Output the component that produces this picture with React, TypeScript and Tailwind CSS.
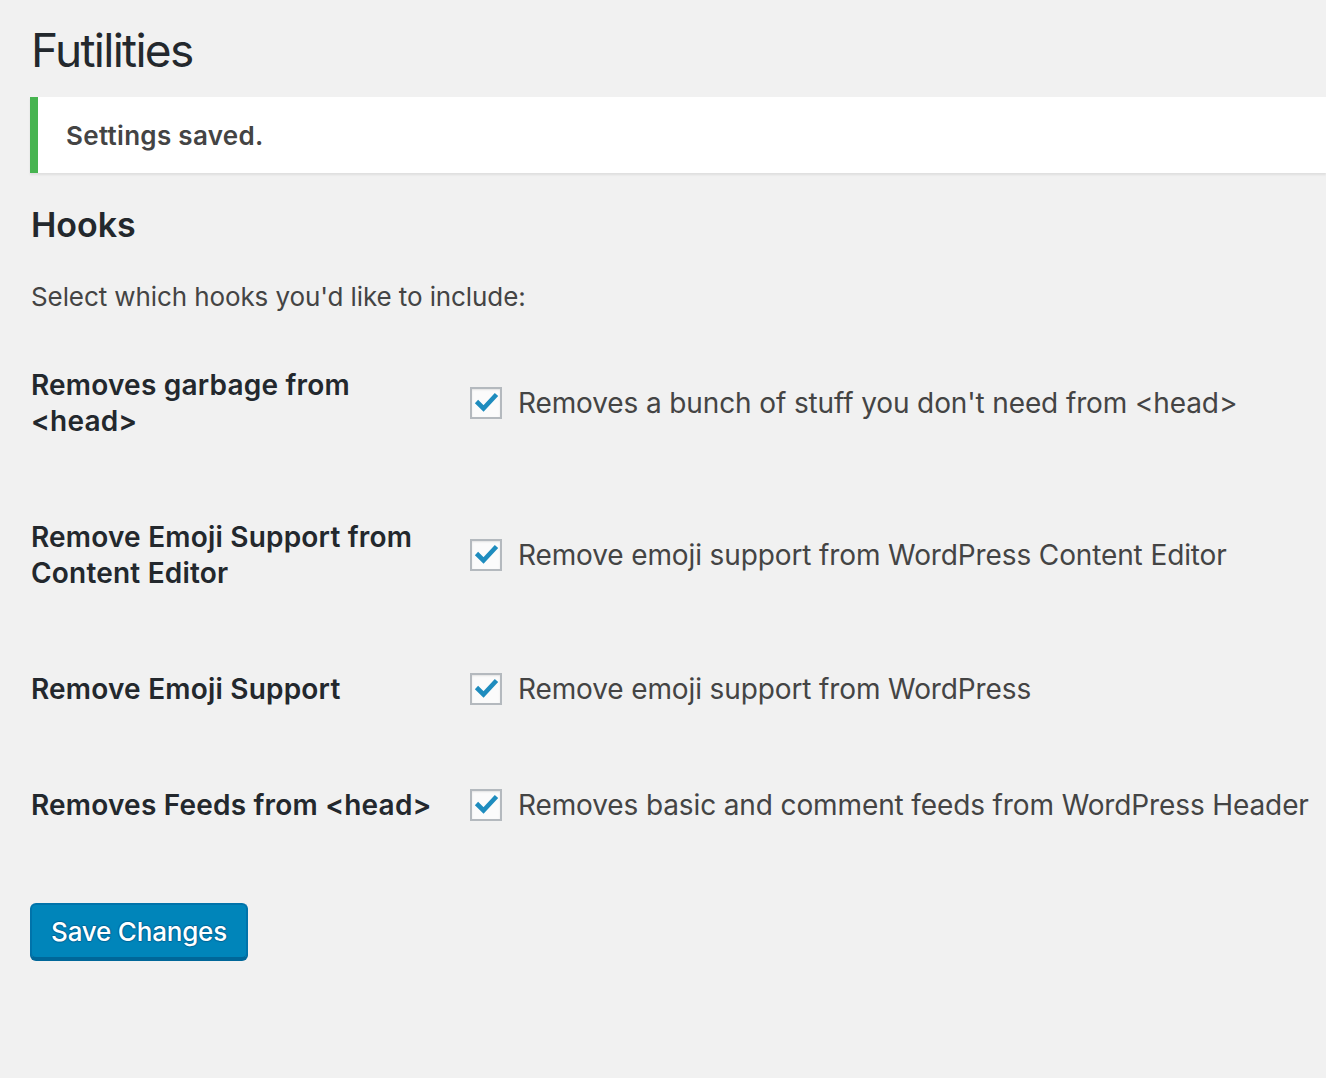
import React from "react";

const rows: { label: React.ReactNode; desc: string }[] = [
  { label: <>Removes garbage from<br />&lt;head&gt;</>, desc: "Removes a bunch of stuff you don't need from <head>" },
  { label: <>Remove Emoji Support from<br />Content Editor</>, desc: "Remove emoji support from WordPress Content Editor" },
  { label: <>Remove Emoji Support</>, desc: "Remove emoji support from WordPress" },
  { label: <>Removes Feeds from &lt;head&gt;</>, desc: "Removes basic and comment feeds from WordPress Header" },
];

function Check() {
  return (
    <span className="flex h-[32px] w-[32px] shrink-0 items-center justify-center border-2 border-[#b4b9be] bg-[#fbfbfb] shadow-[inset_0_1px_2px_rgba(0,0,0,0.1)]">
      <svg width="28" height="28" viewBox="0 0 28 28">
        <path d="M4.5 12.5 L11.5 19.5 L24.5 5.5" fill="none" stroke="#1e8cbe" strokeWidth="4.6" strokeLinecap="butt" strokeLinejoin="miter" />
      </svg>
    </span>
  );
}

export default function App() {
  return (
    <div
      className="min-h-[1078px] w-full overflow-hidden bg-[#f1f1f1] pl-[30px]"
      style={{ fontFamily: "Inter, 'Noto Sans', 'Liberation Sans', sans-serif" }}
    >
      <h1 className="pt-[20px] pl-[1px] text-[46px] leading-[60px] font-normal tracking-[-1.7px] text-[#23282d]">Futilities</h1>
      <div className="mt-[17px] flex h-[76px] items-center border-l-[8px] border-[#46b450] bg-white pl-[28px] shadow-[0_2px_2px_rgba(0,0,0,0.08)]">
        <p className="text-[26px] font-semibold tracking-[0.3px] text-[#444]">Settings saved.</p>
      </div>
      <h2 className="mt-[30px] pl-[1px] text-[34px] leading-[44px] font-semibold text-[#23282d]">Hooks</h2>
      <p className="mt-[30px] pl-[1px] text-[26px] leading-[39px] tracking-[-0.1px] text-[#444]">Select which hooks you'd like to include:</p>
      <div className="mt-[11px] flex flex-col">
        {rows.map((r, i) => (
          <div key={i} className="flex items-center py-[40px]">
            <div className="w-[440px] shrink-0 self-start whitespace-nowrap pl-[1px] text-[28px] leading-[36px] font-semibold tracking-[0.2px] text-[#23282d]">
              {r.label}
            </div>
            <label className="flex items-center gap-[16px] text-[28px] leading-[36px] tracking-[-0.12px] whitespace-nowrap text-[#444]">
              <Check />
              <span>{r.desc}</span>
            </label>
          </div>
        ))}
      </div>
      <button className="mt-[40px] h-[56px] w-[218px] rounded-[6px] border-2 border-[#0073aa] border-b-[#006799] bg-[#0085ba] text-[26px] font-medium tracking-[-0.2px] text-white shadow-[0_2px_0_#006799] [text-shadow:0_-1px_1px_#006799,1px_0_1px_#006799,0_1px_1px_#006799,-1px_0_1px_#006799]">
        Save Changes
      </button>
    </div>
  );
}
